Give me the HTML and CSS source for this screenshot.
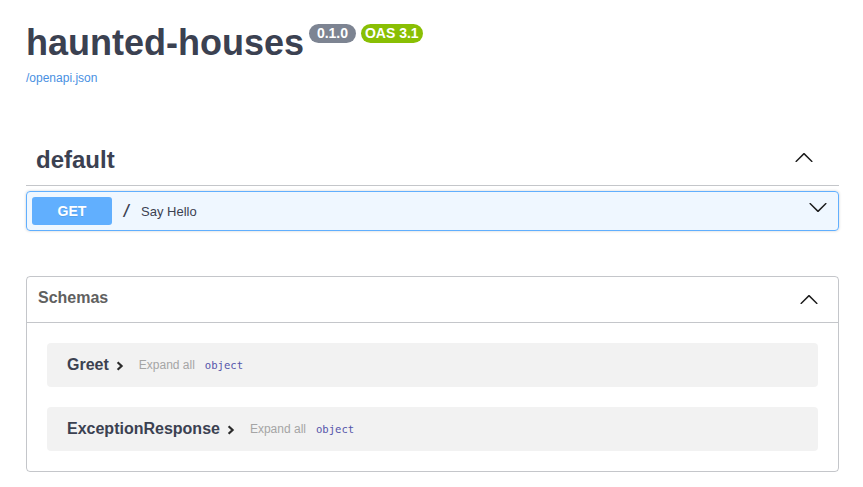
FILE: index.html
```html
<!DOCTYPE html>
<html lang="en">
<head>
<meta charset="utf-8">
<title>haunted-houses</title>
<link rel="stylesheet" href="styles.css">
</head>
<body>
<div class="wrapper">
  <section class="info">
    <div class="title-row">
      <h2 class="title">haunted-houses</h2>
      <span class="pill pill-version"> 0.1.0 </span>
      <span class="pill pill-oas">OAS 3.1</span>
    </div>
    <a class="spec-link" href="#">/openapi.json</a>
  </section>

  <section class="tag-section">
    <div class="tag-header">
      <h3 class="tag-name">default</h3>
      <svg class="arrow arrow-tag" width="20" height="20" viewBox="0 0 20 20"><path d="M17.418 13.891c.272.268.709.268.979 0s.271-.701 0-.969l-7.908-7.83c-.27-.268-.707-.268-.979 0l-7.908 7.83c-.27.268-.27.701 0 .969.271.268.709.268.979 0L10 6.75l7.418 7.141z"/></svg>
    </div>
    <div class="opblock">
      <span class="method">GET</span>
      <span class="path">/</span>
      <span class="desc">Say Hello</span>
      <svg class="arrow arrow-op" width="20" height="20" viewBox="0 0 20 20"><path d="M17.418 6.109c.272-.268.709-.268.979 0s.271.701 0 .969l-7.908 7.83c-.27.268-.707.268-.979 0l-7.908-7.83c-.27-.268-.27-.701 0-.969.271-.268.709-.268.979 0L10 13.25l7.418-7.141z"/></svg>
    </div>
  </section>

  <section class="models">
    <div class="models-header">
      <h4 class="models-title">Schemas</h4>
      <svg class="arrow" width="20" height="20" viewBox="0 0 20 20"><path d="M17.418 13.891c.272.268.709.268.979 0s.271-.701 0-.969l-7.908-7.83c-.27-.268-.707-.268-.979 0l-7.908 7.83c-.27.268-.27.701 0 .969.271.268.709.268.979 0L10 6.75l7.418 7.141z"/></svg>
    </div>
    <div class="models-body">
      <div class="model-box">
        <span class="model-title">Greet</span>
        <svg class="model-toggle" width="8" height="10" viewBox="0 0 8 10"><polyline points="1.6,1.2 5.6,5 1.6,8.8" fill="none" stroke="#2b2b2b" stroke-width="2.2"/></svg>
        <span class="expand-all">Expand all</span>
        <span class="prop-type">object</span>
      </div>
      <div class="model-box">
        <span class="model-title">ExceptionResponse</span>
        <svg class="model-toggle" width="8" height="10" viewBox="0 0 8 10"><polyline points="1.6,1.2 5.6,5 1.6,8.8" fill="none" stroke="#2b2b2b" stroke-width="2.2"/></svg>
        <span class="expand-all">Expand all</span>
        <span class="prop-type">object</span>
      </div>
    </div>
  </section>
</div>
</body>
</html>
```

FILE: styles.css
```css
html, body {
  margin: 0;
  padding: 0;
  background: #ffffff;
}

body {
  font-family: "Liberation Sans", Arial, sans-serif;
  color: #3b4151;
}

.wrapper {
  padding: 0 24px 0 26px;
}

/* ---------- info ---------- */
.info {
  padding-top: 25px;
}

.title-row {
  display: flex;
  align-items: flex-start;
}

.title {
  margin: 0 5px 0 0;
  font-size: 36px;
  line-height: 36px;
  font-weight: 700;
  color: #3b4151;
}

.pill {
  display: inline-block;
  padding: 2px 4px;
  border-radius: 57px;
  font-size: 14px;
  line-height: 15px;
  font-weight: 700;
  color: #ffffff;
  white-space: pre;
  margin-top: -1px;
}

.pill-version {
  background: #7d8492;
}

.pill-oas {
  background: #89bf04;
  margin-left: 5px;
}

.spec-link {
  display: block;
  margin-top: 10px;
  font-size: 12px;
  line-height: 14px;
  color: #4990e2;
  text-decoration: none;
}

/* ---------- tag section ---------- */
.tag-section {
  margin-top: 50px;
}

.tag-header {
  display: flex;
  align-items: center;
  justify-content: space-between;
  padding: 10px 25px 10px 10px;
  border-bottom: 1px solid rgba(59, 65, 81, 0.3);
}

.tag-name {
  margin: 0;
  font-size: 24px;
  line-height: 30px;
  font-weight: 700;
  color: #3b4151;
}

.arrow {
  fill: #1b1b1b;
  flex: none;
}

.arrow-tag {
  margin-bottom: 5px;
}

.opblock {
  display: flex;
  align-items: center;
  margin-top: 5px;
  padding: 5px;
  border: 1px solid #61affe;
  border-radius: 4px;
  background: rgba(97, 175, 254, 0.1);
  box-shadow: 0 0 3px rgba(0, 0, 0, 0.19);
}

.method {
  min-width: 80px;
  padding: 6px 0;
  border-radius: 3px;
  background: #61affe;
  color: #ffffff;
  font-size: 14px;
  line-height: 16px;
  font-weight: 700;
  text-align: center;
  text-shadow: 0 1px 0 rgba(0, 0, 0, 0.1);
}

.path {
  padding: 0 10px;
  font-family: "DejaVu Sans Mono", "Liberation Mono", monospace;
  font-size: 15px;
  font-weight: 700;
  color: #3b4151;
}

.desc {
  flex: 1;
  font-size: 13px;
  color: #3b4151;
}

.arrow-op {
  align-self: flex-start;
  margin-right: 5px;
}

/* ---------- models ---------- */
.models {
  margin-top: 45px;
  border: 1px solid rgba(59, 65, 81, 0.3);
  border-radius: 4px;
}

.models-header {
  display: flex;
  align-items: center;
  justify-content: space-between;
  padding: 10px 19px 10px 11px;
  border-bottom: 1px solid rgba(59, 65, 81, 0.3);
}

.models-title {
  margin: 0;
  padding-bottom: 4px;
  font-size: 16px;
  line-height: 21px;
  font-weight: 700;
  color: #606060;
}

.models-body {
  display: flex;
  flex-direction: column;
  gap: 20px;
  padding: 20px 20px;
}

.model-box {
  display: flex;
  align-items: center;
  padding: 10px 20px;
  border-radius: 4px;
  background: rgba(0, 0, 0, 0.05);
}

.model-title {
  font-size: 16px;
  line-height: 24px;
  font-weight: 700;
  color: #3b4151;
}

.model-toggle {
  margin-left: 7px;
  margin-top: 1px;
}

.expand-all {
  margin-left: 15px;
  font-size: 12px;
  color: #a5a5a5;
}

.prop-type {
  margin-left: 10px;
  font-family: "DejaVu Sans Mono", "Liberation Mono", monospace;
  font-size: 10.6px;
  color: #5555aa;
}
```
